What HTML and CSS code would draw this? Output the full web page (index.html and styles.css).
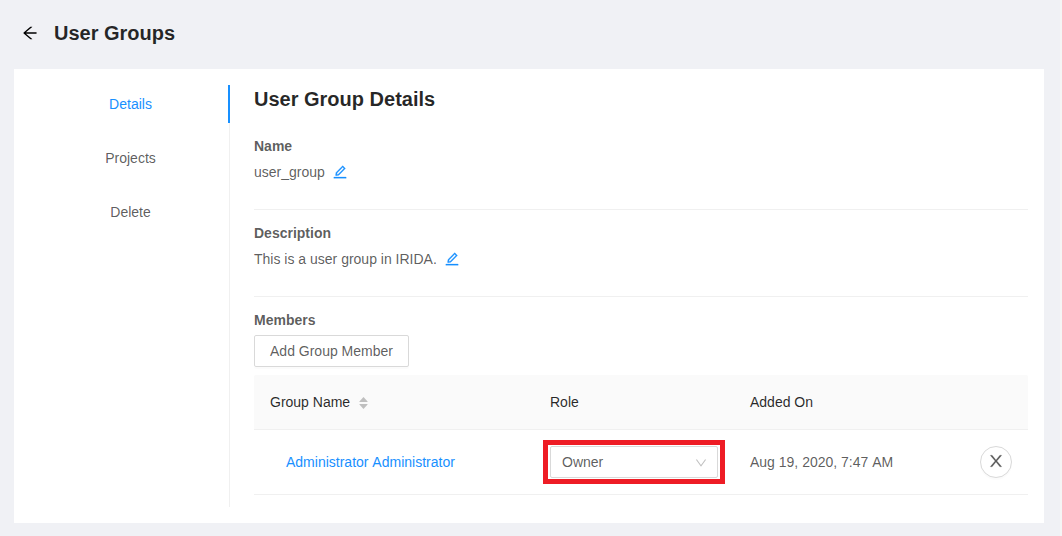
FILE: index.html
```html
<!DOCTYPE html>
<html lang="en">
<head>
<meta charset="utf-8">
<title>User Groups</title>
<link rel="stylesheet" href="styles.css">
</head>
<body>
<svg class="defs" aria-hidden="true">
  <symbol id="edit" viewBox="64 64 896 896"><path d="M257.7 752c2 0 4-.2 6-.5L431.9 722c2-.4 3.9-1.3 5.3-2.8l423.9-423.9a9.96 9.96 0 000-14.1L694.9 114.9c-1.9-1.9-4.4-2.9-7.1-2.9s-5.2 1-7.1 2.9L256.8 538.8c-1.5 1.5-2.4 3.3-2.8 5.3l-29.5 168.2a33.5 33.5 0 009.4 29.8c6.6 6.4 14.9 9.9 23.8 9.9zm67.4-174.4L687.8 215l73.3 73.3-362.7 362.6-88.9 15.7 15.6-89zM880 836H144c-17.7 0-32 14.3-32 32v36c0 4.4 3.6 8 8 8h784c4.4 0 8-3.6 8-8v-36c0-17.7-14.3-32-32-32z"/></symbol>
</svg>
<div class="page">
  <header class="page-header">
    <svg class="back" viewBox="64 64 896 896"><path d="M872 474H286.9l350.2-304c5.6-4.9 2.2-14-5.2-14h-88.5c-3.9 0-7.6 1.4-10.5 3.9L155 487.8a31.96 31.96 0 000 48.3L535.1 866c1.5 1.3 3.3 2 5.2 2h91.5c7.4 0 10.8-9.2 5.2-14L286.9 550H872c4.4 0 8-3.6 8-8v-60c0-4.4-3.6-8-8-8z"/></svg>
    <h1 class="title">User Groups</h1>
  </header>
  <main class="card">
    <nav class="menu">
      <a class="menu-item active">Details</a>
      <a class="menu-item">Projects</a>
      <a class="menu-item">Delete</a>
    </nav>
    <section class="content">
      <h2 class="title">User Group Details</h2>
      <div class="field">
        <div class="label">Name</div>
        <div class="value">user_group<svg class="edit"><use href="#edit"/></svg></div>
      </div>
      <div class="field">
        <div class="label">Description</div>
        <div class="value">This is a user group in IRIDA.<svg class="edit"><use href="#edit"/></svg></div>
      </div>
      <div class="members">
        <div class="label">Members</div>
        <button class="btn">Add Group Member</button>
        <div class="table">
          <div class="row head">
            <div class="cell">Group Name
              <span class="sorter">
                <svg viewBox="0 0 9 5"><path d="M4.5 0 8.6 4.6Q8.8 5 8.4 5H.6Q.2 5 .4 4.6Z"/></svg>
                <svg viewBox="0 0 9 5"><path d="M4.5 5 8.6 .4Q8.8 0 8.4 0H.6Q.2 0 .4 .4Z"/></svg>
              </span>
            </div>
            <div class="cell">Role</div>
            <div class="cell">Added On</div>
            <div class="cell"></div>
          </div>
          <div class="row body">
            <div class="cell name"><a class="link">Administrator Administrator</a></div>
            <div class="cell role">
              <div class="highlight">
                <div class="select">Owner
                  <svg class="down" viewBox="64 64 896 896"><path d="M884 256h-75c-5.1 0-9.9 2.5-12.9 6.6L512 654.2 227.9 262.6c-3-4.1-7.8-6.6-12.9-6.6h-75c-6.5 0-10.3 7.4-6.5 12.7l352.6 486.1c12.8 17.6 39 17.6 51.7 0l352.6-486.1c3.9-5.3.1-12.7-6.4-12.7z"/></svg>
                </div>
              </div>
            </div>
            <div class="cell">Aug 19, 2020, 7:47 AM</div>
            <div class="cell">
              <button class="round"><svg viewBox="64 64 896 896"><path d="M563.8 512l262.5-312.9c4.4-5.2.7-13.1-6.1-13.1h-79.8c-4.7 0-9.2 2.1-12.3 5.7L511.6 449.8 295.1 191.7c-3-3.6-7.5-5.7-12.3-5.7H203c-6.8 0-10.5 7.9-6.1 13.1L459.4 512 196.9 824.9A7.95 7.95 0 00203 838h79.8c4.7 0 9.2-2.1 12.3-5.7l216.5-258.1 216.5 258.1c3 3.6 7.5 5.7 12.3 5.7h79.8c6.8 0 10.5-7.9 6.1-13.1L563.8 512z"/></svg></button>
            </div>
          </div>
        </div>
      </div>
    </section>
  </main>
</div>
</body>
</html>
```
FILE: styles.css
```css
* { box-sizing: border-box; }
body {
  margin: 0;
  background: #f5f5f5;
  color: rgba(0, 0, 0, .65);
  font: 14px/22px "Liberation Sans", Arial, sans-serif;
}
svg { display: block; fill: currentColor; }
.defs { display: none; }
.page {
  height: 536px;
  margin-right: 2px;
  padding: 0 16px 13px 14px;
  background: #f0f1f5;
  overflow: hidden;
}
.page-header {
  display: flex;
  align-items: center;
  height: 69px;
  padding: 0 0 3px 8px;
  gap: 16px;
}
.back { width: 16px; height: 16px; color: #000; }
.title {
  margin: 0;
  font-size: 20px;
  line-height: 28px;
  font-weight: 700;
  color: rgba(0, 0, 0, .85);
}
.card {
  display: flex;
  height: 454px;
  padding: 16px;
  background: #fff;
}
.menu {
  display: flex;
  flex-direction: column;
  gap: 16px;
  width: 200px;
  border-right: 1px solid #f0f0f0;
}
.menu-item {
  height: 38px;
  margin-right: -1px;
  padding: 0 26px 0 29px;
  line-height: 38px;
  text-align: center;
  border-right: 2px solid transparent;
}
.menu-item.active { color: #1890ff; border-color: #1890ff; }
.content { flex: 1; padding-left: 24px; }
.field {
  height: 87px;
  padding-top: 12px;
  border-bottom: 1px solid #f0f0f0;
}
.content > .title + .field { height: 97px; padding-top: 22px; }
.label { font-weight: 700; line-height: 22px; }
.value { display: flex; align-items: center; height: 30px; }
.edit {
  width: 14px;
  height: 14px;
  margin-left: 8px;
  color: #1890ff;
  stroke: currentColor;
  stroke-width: 18;
}
.members { padding-top: 12px; }
.btn {
  display: block;
  width: 155px;
  height: 32px;
  margin: 4px 0 8px;
  padding: 0;
  font: inherit;
  color: inherit;
  background: #fff;
  border: 1px solid #d9d9d9;
  border-radius: 2px;
  box-shadow: 0 2px 0 rgba(0, 0, 0, .015);
}
.row {
  display: grid;
  grid-template-columns: 280px 200px 230px 64px;
  align-items: center;
  height: 65px;
  border-bottom: 1px solid #f0f0f0;
}
.row.body { font-kerning: none; }
.row.head {
  height: 55px;
  color: rgba(0, 0, 0, .85);
  background: #fafafa;
  border-radius: 2px 2px 0 0;
}
.cell { display: flex; align-items: center; padding: 0 16px; }
.cell.name { padding-left: 32px; }
.link { color: #1890ff; }
.sorter {
  display: flex;
  flex-direction: column;
  gap: 2px;
  margin: 2px 0 0 9px;
  color: #bfbfbf;
}
.sorter svg { width: 9px; height: 5px; }
.cell.role { padding: 0 0 0 9px; }
.highlight {
  width: 182px;
  height: 44px;
  padding: 1px 2px;
  border: 5px solid #ee1c25;
}
.select {
  display: flex;
  align-items: center;
  justify-content: space-between;
  width: 168px;
  height: 32px;
  padding: 0 10px 0 11px;
  border: 1px solid #d9d9d9;
  border-radius: 2px;
}
.down { width: 12px; height: 12px; margin-top: 1px; color: rgba(0, 0, 0, .25); }
.round {
  display: flex;
  align-items: center;
  justify-content: center;
  width: 32px;
  height: 32px;
  padding: 0 0 2px;
  color: inherit;
  background: #fff;
  border: 1px solid #d9d9d9;
  border-radius: 50%;
  box-shadow: 0 2px 0 rgba(0, 0, 0, .015);
}
.round svg { width: 16px; height: 16px; flex: none; stroke: #595959; stroke-width: 12; }
```
